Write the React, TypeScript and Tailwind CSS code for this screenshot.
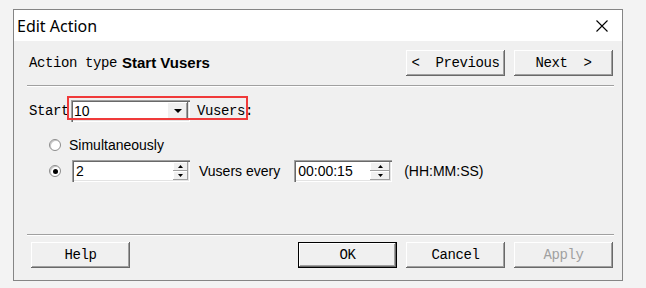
import React from "react";

const mono = { fontFamily: '"Liberation Mono", "DejaVu Sans Mono", monospace', letterSpacing: "-0.4px" };
const sans = { fontFamily: '"Liberation Sans", Arial, sans-serif' };

function Btn({ children, w = "w-[99px]", disabled = false, def = false }: { children: React.ReactNode; w?: string; disabled?: boolean; def?: boolean }) {
  return (
    <div
      className={`${w} h-[26px] flex items-center justify-center text-[14px] bg-[#f0f0f0] ${
        def
          ? "border border-black shadow-[inset_-1px_-1px_#696969,inset_1px_1px_#ffffff,inset_-2px_-2px_#a0a0a0]"
          : "shadow-[inset_-1px_-1px_#696969,inset_1px_1px_#ffffff,inset_-2px_-2px_#a0a0a0,inset_2px_2px_#f0f0f0]"
      } ${disabled ? "text-[#a0a0a0]" : "text-black"}`}
      style={mono}
    >
      {children}
    </div>
  );
}

function Field({ w, children }: { w: string; children: React.ReactNode }) {
  return (
    <div className={`${w} h-[22px] bg-white flex items-stretch shadow-[inset_1px_1px_#a0a0a0,inset_2px_2px_#696969,inset_-1px_-1px_#ffffff,inset_-2px_-2px_#e3e3e3] p-[2px]`}>
      {children}
    </div>
  );
}

function Spin({ w }: { w: string }) {
  const half = "flex-1 flex items-center justify-center bg-[#f0f0f0] shadow-[inset_-1px_-1px_#a0a0a0,inset_1px_1px_#ffffff]";
  return (
    <div className={`${w} flex flex-col`}>
      <div className={half}>
        <svg width="5" height="3" viewBox="0 0 5 3"><path d="M2.5 0 L5 3 L0 3 Z" fill="#000" /></svg>
      </div>
      <div className={half}>
        <svg width="5" height="3" viewBox="0 0 5 3"><path d="M0 0 L5 0 L2.5 3 Z" fill="#000" /></svg>
      </div>
    </div>
  );
}

function Radio({ checked }: { checked?: boolean }) {
  return (
    <div className="w-[12px] h-[12px] rounded-full bg-white border border-[#8c8c8c] shadow-[inset_1px_1px_#c8c8c8] flex items-center justify-center">
      {checked && <div className="w-[5px] h-[5px] rounded-full bg-black" />}
    </div>
  );
}

export default function App() {
  return (
    <div className="relative w-[646px] h-[288px] bg-[#f3f3f3] pl-[13px] pt-[9px] overflow-hidden">
      <div className="w-[610px] h-[272px] border border-[#858585] bg-[#f0f0f0] flex flex-col">
        {/* title bar */}
        <div className="h-[31px] bg-white flex items-center pl-[3px]">
          <span className="text-[16px] text-black leading-none" style={{ fontFamily: '"Noto Sans", "Liberation Sans", sans-serif' }}>
            Edit Action
          </span>
          <svg className="ml-auto mr-[14px]" width="12" height="12" viewBox="0 0 12 12">
            <path d="M0.5 0.5 L11.5 11.5 M11.5 0.5 L0.5 11.5" stroke="#000" strokeWidth="1.1" />
          </svg>
        </div>

        {/* action row */}
        <div className="mt-[9px] h-[26px] flex items-center pl-[15px] pr-[9px]">
          <span className="text-[14px] text-black" style={mono}>Action type</span>
          <span className="text-[15px] font-bold text-black ml-[5px]" style={sans}>Start Vusers</span>
          <div className="ml-auto flex gap-[9px]">
            <Btn><span className="whitespace-pre">{"<  Previous"}</span></Btn>
            <Btn><span className="whitespace-pre">{"Next  >"}</span></Btn>
          </div>
        </div>

        <div className="mt-[9px] ml-[13px] mr-[8px] h-[2px] border-t border-[#a0a0a0] border-b border-b-white" />

        {/* start row */}
        <div className="mt-[13px] h-[22px] flex items-center pl-[15px]">
          <span className="text-[14px] text-black w-[42px]" style={mono}>Start</span>
          <Field w="w-[119px]">
            <span className="flex-1 text-[14px] leading-[18px] pl-[1px] text-black" style={sans}>10</span>
            <div className="w-[21px] flex items-center justify-center bg-[#f0f0f0] shadow-[inset_-1px_-1px_#696969,inset_1px_1px_#ffffff,inset_-2px_-2px_#a0a0a0]">
              <svg width="8" height="4" viewBox="0 0 8 4"><path d="M0 0 L8 0 L4 4 Z" fill="#000" /></svg>
            </div>
          </Field>
          <span className="ml-[7px] text-[14px] text-black" style={mono}>Vusers:</span>
        </div>

        {/* simultaneously */}
        <div className="mt-[15px] h-[16px] flex items-center pl-[35px]">
          <Radio />
          <span className="ml-[8px] text-[14px] text-black" style={sans}>Simultaneously</span>
        </div>

        {/* every row */}
        <div className="mt-[7px] h-[22px] flex items-center pl-[35px]">
          <Radio checked />
          <div className="ml-[11px]">
            <Field w="w-[118px]">
              <span className="flex-1 text-[14px] leading-[18px] pl-[2px] text-black" style={sans}>2</span>
              <Spin w="w-[15px]" />
            </Field>
          </div>
          <span className="ml-[9px] text-[14px] text-black" style={sans}>Vusers every</span>
          <div className="ml-[14px]">
            <Field w="w-[98px]">
              <span className="flex-1 text-[14px] leading-[18px] pl-[2px] text-black" style={sans}>00:00:15</span>
              <Spin w="w-[20px]" />
            </Field>
          </div>
          <span className="ml-[12px] text-[14px] text-black" style={sans}>(HH:MM:SS)</span>
        </div>

        <div className="mt-[52px] ml-[13px] mr-[8px] h-[2px] border-t border-[#a0a0a0] border-b border-b-white" />

        {/* bottom buttons */}
        <div className="mt-[6px] h-[26px] flex items-center pl-[17px] pr-[9px]">
          <Btn>Help</Btn>
          <div className="ml-auto flex gap-[9px]">
            <Btn def>OK</Btn>
            <Btn>Cancel</Btn>
            <Btn disabled>Apply</Btn>
          </div>
        </div>
      </div>

      {/* red annotation */}
      <div className="absolute left-[67px] top-[96px] w-[181px] h-[24px] border-2 border-[#f03a3a] pointer-events-none" />
    </div>
  );
}
